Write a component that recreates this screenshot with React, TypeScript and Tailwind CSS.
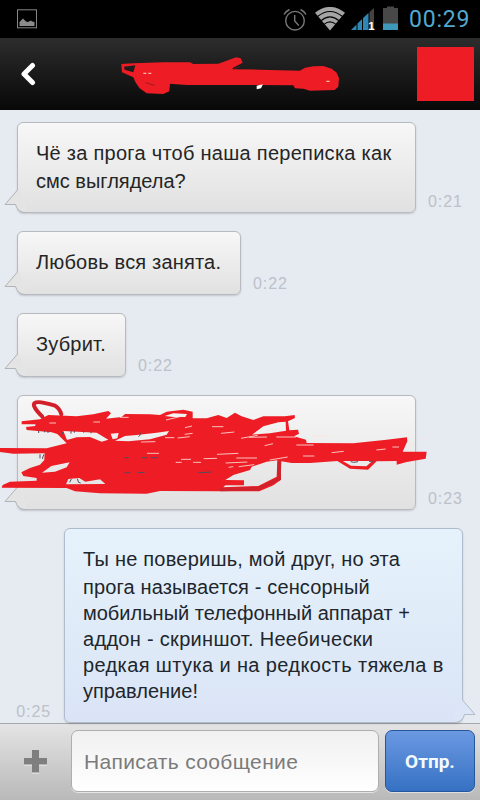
import type { ReactNode } from "react";

type Message = {
  id: number;
  time: string;
  lines: { text: string; className: string }[];
  outgoing?: boolean;
  box: string;
  timeClass: string;
  overlay?: ReactNode;
};

const messages: Message[] = [
  {
    id: 1,
    time: "0:21",
    box: "h-[91px] w-[399px] pt-[16px]",
    timeClass: "ml-[12px]",
    lines: [
      { text: "Чё за прога чтоб наша переписка как", className: "h-7 tracking-[0.27px]" },
      { text: "смс выглядела?", className: "h-7" },
    ],
  },
  {
    id: 2,
    time: "0:22",
    box: "h-[64px] w-[224px] pt-[16px]",
    timeClass: "ml-[12px]",
    lines: [{ text: "Любовь вся занята.", className: "h-7 tracking-[0.18px]" }],
  },
  {
    id: 3,
    time: "0:22",
    box: "h-[64px] w-[109px] pt-[16px]",
    timeClass: "ml-[12px]",
    lines: [{ text: "Зубрит.", className: "h-7 tracking-[0.2px]" }],
  },
  {
    id: 4,
    time: "0:23",
    box: "h-[115px] w-[399px]",
    timeClass: "ml-[12px]",
    lines: [],
    overlay: <MessageScribble />,
  },
  {
    id: 5,
    time: "0:25",
    outgoing: true,
    box: "h-[195px] w-[399px] pt-[16px]",
    timeClass: "mr-[13px]",
    lines: [
      { text: "Ты не поверишь, мой друг, но эта", className: "h-[28px] tracking-[0.22px]" },
      { text: "прога называется - сенсорный", className: "h-[26px] tracking-[0.14px]" },
      { text: "мобильный телефонный аппарат +", className: "h-[26px]" },
      { text: "аддон - скриншот. Неебически", className: "h-[26px] tracking-[0.3px]" },
      { text: "редкая штука и на редкость тяжела в", className: "h-[26px] tracking-[0.38px]" },
      { text: "управление!", className: "h-[26px]" },
    ],
  },
];

function StatusBar() {
  return (
    <div className="flex h-[38px] shrink-0 items-start bg-black">
      <svg className="mt-[9px] ml-[17px]" width="20" height="20" viewBox="0 0 20 20">
        <rect x="0.5" y="0.8" width="19" height="18" fill="none" stroke="#858585" />
        <path d="M2.5 17V13L4 11.5 5 10.500 6 9.500 7.500 11 9 12.500 10.500 13 12 12.500 14 11.500 15 12.500 17.500 13V17z" fill="#8b8b8b" />
      </svg>
      <div className="flex-1" />
      <svg className="mt-[8px]" width="24" height="24" viewBox="0 0 24 24" fill="none" stroke="#777" strokeWidth="1.4">
        <circle cx="12" cy="12.7" r="9.3" />
        <path d="M11.7 7v6l4 4.5M1 6.5Q3 3 6.5 1.5M17.500 1.500Q21 3 23 6.500" />
      </svg>
      <svg className="mt-[7px] ml-[7px]" width="32" height="24" viewBox="0 0 32 24">
        <path d="M16 23.500 1 5.800Q16-6 31 5.800Z" fill="#a5a5a5" />
        <path d="M3.500 9.500Q16-.5 28.500 9.500M7 13.700Q16 6 25 13.700M10 17.400Q16 12.300 22 17.400" fill="none" stroke="#050505" strokeWidth="1.200" />
      </svg>
      <svg className="mt-[7px] ml-[5px]" width="26" height="26" viewBox="0 0 26 26">
        <path d="M0 23 5.500 17.500V23zM6.500 23V16.500L11 12V23zM12 23V11L17.500 6V23z" fill="#3187b4" />
        <path d="M18.500 23V5L23 1V23z" fill="#49403f" />
        <text x="17.300" y="22.800" fontSize="11.500" className="fill-white font-['Liberation_Sans'] font-bold">1</text>
      </svg>
      <svg className="mt-[6px] ml-[5px]" width="17" height="25" viewBox="0 0 17 25">
        <path d="M1 2H5V.5H12V2H16V18H1z" fill="#484848" />
        <path d="M1 17.500H16V24H1z" fill="#3d98b9" />
      </svg>
      <span className="mt-[5px] mr-[9px] ml-[10px] w-[62px] font-['Roboto',sans-serif] text-[23px] leading-[29px] tracking-[0.8px] whitespace-nowrap text-[#54a7cf]">
        00:29
      </span>
    </div>
  );
}

function TitleBar() {
  return (
    <div className="flex h-[72px] shrink-0 items-start bg-linear-to-b from-[#2d2d2d] to-[#080808]">
      <svg className="mt-[24px] ml-[19px]" width="18" height="26" viewBox="0 0 18 26">
        <path d="M13.500 3.500 5 12 13.500 20.500" fill="none" stroke="#fff" strokeWidth="5" strokeLinecap="round" strokeLinejoin="round" />
      </svg>
      <svg className="mt-[17px] ml-[81px]" width="225" height="42" viewBox="354 165 675 126">
        <path
          fillRule="evenodd"
          fill="#ee1c24"
          d="M364 192 400 190 490 187 570 187 580 192 655 191 680 182 708 172 722 175 728 188 698 204 698 208 780 209 900 212 915 203 940 199 970 198 995 206 1010 218 1017 235 1015 260 1004 270 930 272 910 266 885 265 880 256 720 255 560 255 510 251 508 274 490 282 440 280 418 264 406 246 400 232 366 217ZM372 200 406 196 400 217 374 209Z"
        />
        <path d="m770 257 19-4-6 12-13 3z" fill="#fff" />
        <path d="M430 220h9m6 0h9m525 24h10" stroke="#ffb9a6" strokeWidth="4" />
        <path d="m436 248 28 8M700 207l20-7" stroke="#7e171b" strokeWidth="2" />
      </svg>
      <div className="mt-[9px] ml-[74px] h-[54px] w-[57px] bg-[#ee1c24]" />
    </div>
  );
}

function MessageScribble() {
  return (
    <svg className="absolute top-[-6px] left-[-18px]" width="480" height="130" viewBox="0 0 1440 390">
      <path
        fillRule="evenodd"
        fill="#ee1c24"
        d="M65 94 120 88 145 75 230 79 280 73 325 63 333 70 318 86 365 81 375 72 450 73 480 75 500 65 550 59 578 65 578 85 620 85 655 75 680 84 705 68 725 79 760 90 790 79 855 79 884 75 885 84 864 94 868 121 894 119 897 131 882 139 918 149 920 159 1060 160 1160 149 1221 142 1222 154 1208 185 1280 185 1277 206 1220 216 1190 224 1190 213 1130 214 1104 239 1050 236 1012 213 930 219 875 219 844 214 842 270 820 286 778 304 660 304 480 303 440 311 300 310 225 304 200 294 5 293 8 285 30 275 110 272 110 264 70 258 64 247 90 234 120 224 133 210 134 190 40 191 0 186 0 174 140 175 200 160 172 132 155 127 80 120 78 111 106 108 106 103 65 103ZM190 123 290 128 325 149 305 155 270 141 230 142 201 150ZM332 131 356 129 352 145 338 148ZM345 152 375 138 410 135 470 128 507 123 500 134 450 148 385 154ZM126 248 154 228 209 217 200 232 165 245ZM198 283 205 267 238 264 256 275 300 268 316 282ZM494 78 520 70 561 72 556 81 520 81ZM756 134 790 109 835 97 857 95 858 122 810 130ZM676 270 700 255 750 240 755 230 800 215 832 211 830 260 775 288 670 292 676 286 732 286 732 271ZM1028 213 1117 213 1099 229 1053 227Z"
      />
      <path
        d="M127 80Q94 47 104 39T165 47Q180 57 184 73"
        fill="none"
        stroke="#d31f29"
        strokeWidth="12"
        strokeLinecap="round"
      />
      <path d="M838 214V266L775 296 660 299" fill="none" stroke="#cf222c" strokeWidth="10" />
      <path
        d="M148 99h20m112-3h20m60-14h26m112 8 54-13m3 36 21-5m60 2h34m-116 23 24-3m-45 14 36-4m94-10 40-4m44 16 54-1m28 0h59m-88-20 30-3m106 21h51m-264 6 50-9m-278 7h28m-100 13 43-1m185 38 64-3m-274 0h36m66 18h30m38-2 40-1m58-1h62m-244 13h18m34 0h24m74 2 65-3m67-6 54-9m-147 29 47-6m-77 8 14-2m94-63 25-6m70 4h52m-32 33h34m52-10 36-4m98-4 28-3m20-6h20m28-6 18-5m22-8 6-13"
        fill="none"
        stroke="#fbe3dd"
        strokeWidth="2.500"
      />
      <path
        d="M116 122v7m18-7v5m10-5v7m44-3v7m25-11v9m10-8v5m28-5v5m22-5v7m143 10q7-4 4-12M120 193v12m12-12q-5 9-4 14M214 267l-5 10m23-11q2 15 10 13M374 203h12m40 0h16m12 0h18m-98 45h17m23 0 20-1m161 1 41-2M1052 215q8 4 22 0m33-1h14"
        fill="none"
        stroke="#4f4c60"
        strokeWidth="3"
      />
    </svg>
  );
}

function Tail({ outgoing }: { outgoing?: boolean }) {
  // drawn over the bottom corner so that the bubble's own border is hidden there
  return (
    <svg
      className={outgoing ? "absolute right-[-14px] bottom-[-1px] -scale-x-100" : "absolute bottom-[-1px] left-[-14px]"}
      width="22"
      height="24"
      viewBox="0 0 22 24"
    >
      <path d="M13 1 1 15.500H11.500Q13 22 19 23.500H22V17L15 1Z" fill={outgoing ? "#dce6f6" : "#e4e4e4"} />
      <path
        d="M13.500 0V1L1 15.500H11.500Q13.500 22.500 20 23.500H22"
        fill="none"
        stroke={outgoing ? "#afbccb" : "#b1b3b8"}
      />
    </svg>
  );
}

function Bubble({ message }: { message: Message }) {
  const { outgoing, lines, box, time, timeClass, overlay } = message;
  return (
    <div className={`flex items-end ${outgoing ? "flex-row-reverse pr-[17px]" : "pl-[17px]"}`}>
      <div
        className={`relative shrink-0 rounded-[6px] border bg-linear-to-b pl-[18px] text-[20px] leading-7 shadow-[0_1px_2px_rgba(0,0,0,0.15)] ${
          outgoing
            ? "border-[#afbccb] from-[#e6f2fb] to-[#dae4f6] text-[#20262c]"
            : "border-[#b7babf] from-[#f6f7f6] to-[#e1e1e1] text-[#252525]"
        } ${box}`}
      >
        <Tail outgoing={outgoing} />
        {lines.map((line) => (
          <p key={line.text} className={`relative whitespace-nowrap ${line.className}`}>
            {line.text}
          </p>
        ))}
        {overlay}
      </div>
      <span className={`text-[16px] leading-[22px] tracking-[0.9px] text-[#bcc1ca] ${timeClass}`}>{time}</span>
    </div>
  );
}

function Composer() {
  return (
    <div className="flex h-[77px] shrink-0 items-start border-t border-[#a5a8ae] bg-linear-to-b from-[#e4e4e4] to-[#b9b9b9] pt-[6px]">
      <svg className="mt-[19px] ml-[23px]" width="25" height="26" viewBox="0 0 25 26">
        <path d="M9 2.500H16V9.500H24V16.500H16V24.500H9V16.500H1V9.500H9z" fill="#eee" />
        <path d="M9 1H16V9H24V15.500H16V23.500H9V15.500H1V9H9z" fill="#7f7f7f" />
      </svg>
      <div className="ml-[23px] h-[62px] w-[308px] rounded-[7px] border border-[#aeaeae] bg-linear-to-b from-[#f0f0f0] to-white pt-[17px] pl-[12px] text-[21px] leading-7 tracking-[0.35px] whitespace-nowrap text-[#7b7b7b] shadow-[0_1px_0_rgba(255,255,255,0.6)]">
        Написать сообщение
      </div>
      <button className="ml-[6px] h-[62px] w-[90px] rounded-[7px] border border-[#26579c] bg-linear-to-b from-[#6b99e2] to-[#3571c3] pt-[3px] font-['Roboto','Liberation_Sans',sans-serif] text-[19px] font-bold text-[#f3fbff] shadow-[0_1px_0_rgba(255,255,255,0.5)]">
        Отпр.
      </button>
    </div>
  );
}

export default function App() {
  return (
    <div className="flex h-[800px] w-[480px] flex-col overflow-hidden bg-[#e6eaf1] font-['Liberation_Sans',Arial,sans-serif]">
      <StatusBar />
      <TitleBar />
      <main className="flex min-h-0 flex-1 flex-col gap-[18px] pt-[12px]">
        {messages.map((message) => (
          <Bubble key={message.id} message={message} />
        ))}
      </main>
      <Composer />
    </div>
  );
}
